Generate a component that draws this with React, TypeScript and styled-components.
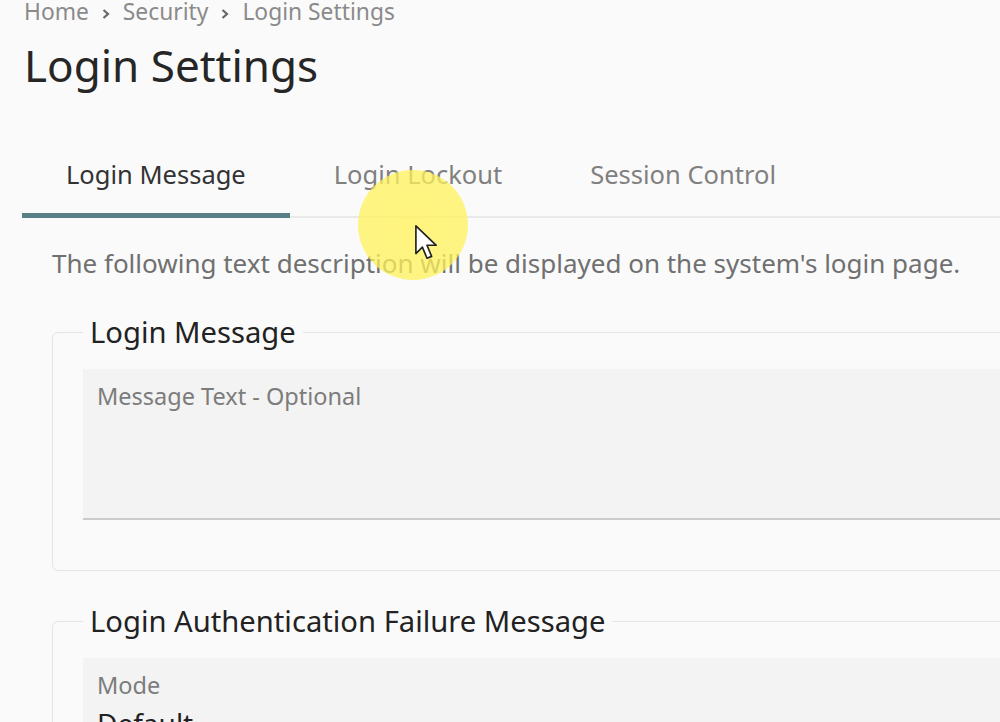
import React from "react";
import styled, { createGlobalStyle } from "styled-components";

const Global = createGlobalStyle`
  html, body { margin: 0; padding: 0; background: #fafafa; }
  body { overflow: hidden; font-family: "Noto Sans", "Open Sans", sans-serif; }
  #root { width: 1000px; height: 722px; overflow: hidden; position: relative; }
`;

const Page = styled.div`
  width: 1100px;
  padding: 0 0 0 24px;
  box-sizing: border-box;
`;

const Breadcrumb = styled.nav`
  display: flex;
  align-items: center;
  gap: 11px;
  font-size: 22.8px;
  line-height: 24px;
  color: #8a8a8a;
`;

const Crumb = styled.span``;

const Chevron = styled.svg`
  width: 12px;
  height: 14px;
  margin-top: 3px;
`;

const Title = styled.h1`
  margin: 13px 0 0 0;
  font-size: 44px;
  line-height: 56px;
  font-weight: 400;
  color: #262626;
`;

const TabBar = styled.div`
  display: flex;
  margin: 64px 0 0 -2px;
  border-bottom: 2px solid #e9e9e9;
`;

const Tab = styled.div<{ $active?: boolean }>`
  position: relative;
  padding: 0 44px 25px;
  font-size: 25.5px;
  line-height: 34px;
  color: ${(p) => (p.$active ? "#333" : "#808080")};
  &::after {
    content: "";
    display: ${(p) => (p.$active ? "block" : "none")};
    position: absolute;
    left: 0;
    right: 0;
    bottom: -2px;
    height: 5px;
    background: #5a8087;
  }
`;

const Description = styled.p`
  margin: 28px 0 0 28px;
  font-size: 26px;
  line-height: 34px;
  color: #707070;
`;

const Group = styled.fieldset`
  margin: 32px 0 0 28px;
  padding: 17px 0 50px 30px;
  border: 1px solid #e4e4e4;
  border-radius: 6px;
  min-width: 0;
  & + & {
    margin-top: 30px;
  }
`;

const Legend = styled.legend`
  padding: 0 7px;
  font-size: 29.2px;
  line-height: 40px;
  color: #222;
`;

const Field = styled.div<{ $tall?: boolean }>`
  background: #f3f3f3;
  border-bottom: 2px solid #cbcbcb;
  height: ${(p) => (p.$tall ? "151px" : "120px")};
  padding: 12px 14px;
  box-sizing: border-box;
`;

const FieldLabel = styled.div`
  font-size: 23.5px;
  line-height: 30px;
  color: #7c7c7c;
`;

const FieldValue = styled.div`
  font-size: 28px;
  line-height: 36px;
  color: #222;
  margin-top: 5px;
`;

const Highlight = styled.div`
  position: absolute;
  left: 358px;
  top: 170px;
  width: 110px;
  height: 110px;
  border-radius: 50%;
  background: radial-gradient(circle, rgba(255, 242, 90, 0.78) 0%, rgba(255, 242, 90, 0.74) 80%, rgba(255, 242, 90, 0) 100%);
  pointer-events: none;
`;

const Cursor = styled.svg`
  position: absolute;
  left: 414px;
  top: 224px;
  width: 26px;
  height: 37px;
  pointer-events: none;
`;

const ChevronIcon = () => (
  <Chevron viewBox="0 0 12 14">
    <path d="M3.5 3l4.5 4-4.5 4" fill="none" stroke="#666" strokeWidth="2.2" />
  </Chevron>
);

export default function App() {
  return (
    <>
      <Global />
      <Page>
        <Breadcrumb>
          <Crumb>Home</Crumb>
          <ChevronIcon />
          <Crumb>Security</Crumb>
          <ChevronIcon />
          <Crumb>Login Settings</Crumb>
        </Breadcrumb>
        <Title>Login Settings</Title>
        <TabBar>
          <Tab $active>Login Message</Tab>
          <Tab>Login Lockout</Tab>
          <Tab>Session Control</Tab>
        </TabBar>
        <Description>
          The following text description will be displayed on the system's login page.
        </Description>
        <Group>
          <Legend>Login Message</Legend>
          <Field $tall>
            <FieldLabel>Message Text - Optional</FieldLabel>
          </Field>
        </Group>
        <Group>
          <Legend>Login Authentication Failure Message</Legend>
          <Field>
            <FieldLabel>Mode</FieldLabel>
            <FieldValue>Default</FieldValue>
          </Field>
        </Group>
      </Page>
      <Highlight />
      <Cursor viewBox="0 0 14 20">
        <path d="M1 1 L1 16 L4.5 12.5 L7 18.5 L9.5 17.5 L7 11.5 L12 11.5 Z" fill="#fff" stroke="#222" strokeWidth="0.9" strokeLinejoin="round" />
      </Cursor>
    </>
  );
}
